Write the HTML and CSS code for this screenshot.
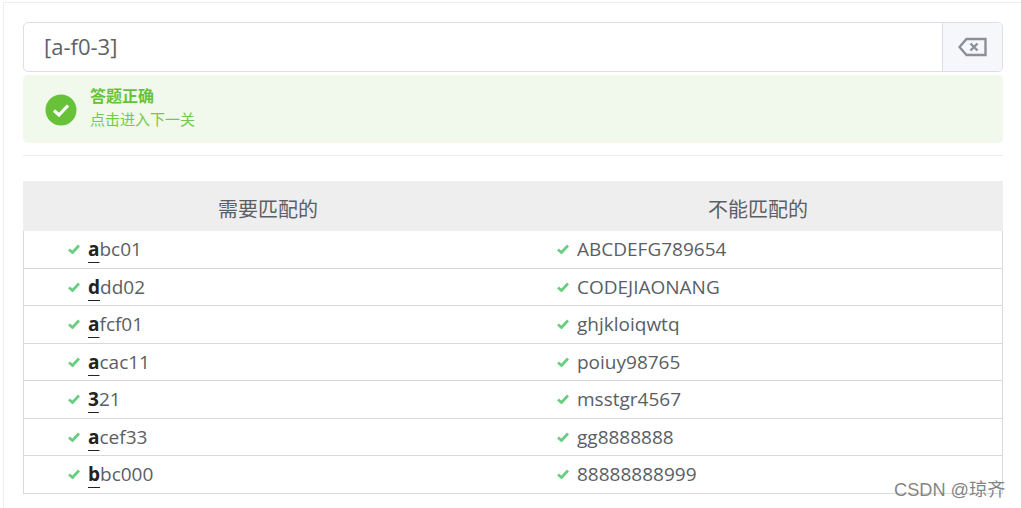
FILE: index.html
```html
<!DOCTYPE html>
<html lang="zh">
<head>
<meta charset="utf-8">
<title>正则练习</title>
<link rel="stylesheet" href="styles.css">
</head>
<body>
<main class="panel">
  <div class="input-group">
    <div class="input">[a-f0-3]</div>
    <div class="addon">
      <svg width="29" height="20" viewBox="0 0 29 20" fill="none" stroke="#8b8f99" stroke-width="2.4"><path d="M8.5 2H27.5V18H8.5L1.5 10Z"/><path d="M12.5 6.5L19.5 13.5M19.5 6.5L12.5 13.5" stroke-width="2.4"/></svg>
    </div>
  </div>
  <div class="alert">
    <svg class="alert-icon" width="32" height="32" viewBox="0 0 32 32"><circle cx="16" cy="16" r="15.5" fill="#67c23a"/><path d="M9 16.5L14 21L23 11.5" fill="none" stroke="#fff" stroke-width="3.2"/></svg>
    <div class="alert-body">
      <div class="alert-title">答题正确</div>
      <div class="alert-desc">点击进入下一关</div>
    </div>
  </div>
  <hr class="divider">
  <section class="table">
    <div class="thead">
      <div class="th">需要匹配的</div>
      <div class="th">不能匹配的</div>
    </div>
    <div class="row"><div class="cell"><svg class="check" viewBox="0 0 12 10"><path d="M1 5.5L4.5 8.5L11 1.5"/></svg><span><b>a</b>bc01</span></div><div class="cell"><svg class="check" viewBox="0 0 12 10"><path d="M1 5.5L4.5 8.5L11 1.5"/></svg><span>ABCDEFG789654</span></div></div>
    <div class="row"><div class="cell"><svg class="check" viewBox="0 0 12 10"><path d="M1 5.5L4.5 8.5L11 1.5"/></svg><span><b>d</b>dd02</span></div><div class="cell"><svg class="check" viewBox="0 0 12 10"><path d="M1 5.5L4.5 8.5L11 1.5"/></svg><span>CODEJIAONANG</span></div></div>
    <div class="row"><div class="cell"><svg class="check" viewBox="0 0 12 10"><path d="M1 5.5L4.5 8.5L11 1.5"/></svg><span><b>a</b>fcf01</span></div><div class="cell"><svg class="check" viewBox="0 0 12 10"><path d="M1 5.5L4.5 8.5L11 1.5"/></svg><span>ghjkloiqwtq</span></div></div>
    <div class="row"><div class="cell"><svg class="check" viewBox="0 0 12 10"><path d="M1 5.5L4.5 8.5L11 1.5"/></svg><span><b>a</b>cac11</span></div><div class="cell"><svg class="check" viewBox="0 0 12 10"><path d="M1 5.5L4.5 8.5L11 1.5"/></svg><span>poiuy98765</span></div></div>
    <div class="row"><div class="cell"><svg class="check" viewBox="0 0 12 10"><path d="M1 5.5L4.5 8.5L11 1.5"/></svg><span><b>3</b>21</span></div><div class="cell"><svg class="check" viewBox="0 0 12 10"><path d="M1 5.5L4.5 8.5L11 1.5"/></svg><span>msstgr4567</span></div></div>
    <div class="row"><div class="cell"><svg class="check" viewBox="0 0 12 10"><path d="M1 5.5L4.5 8.5L11 1.5"/></svg><span><b>a</b>cef33</span></div><div class="cell"><svg class="check" viewBox="0 0 12 10"><path d="M1 5.5L4.5 8.5L11 1.5"/></svg><span>gg8888888</span></div></div>
    <div class="row"><div class="cell"><svg class="check" viewBox="0 0 12 10"><path d="M1 5.5L4.5 8.5L11 1.5"/></svg><span><b>b</b>bc000</span></div><div class="cell"><svg class="check" viewBox="0 0 12 10"><path d="M1 5.5L4.5 8.5L11 1.5"/></svg><span>88888888999</span></div></div>
  </section>
</main>
<div class="watermark">CSDN @琼齐</div>
</body>
</html>
```
FILE: styles.css
```css
html, body { margin: 0; padding: 0; background: #fff; }
body {
  height: 508px;
  overflow: hidden;
  position: relative;
  font-family: "Open Sans", "Noto Sans", "Noto Sans CJK SC", sans-serif;
  color: #5a5e66;
}
.panel {
  margin: 2px 0 0 3px;
  padding: 19px 18px 0 19px;
  border-top: 1px solid #eeeeee;
  border-left: 1px solid #eeeeee;
  height: 506px;
  box-sizing: border-box;
}
.input-group {
  display: flex;
  height: 50px;
  box-sizing: border-box;
  border: 1px solid #dcdfe6;
  border-radius: 5px;
  overflow: hidden;
}
.input {
  flex: 1;
  padding-left: 20px;
  font-size: 22px;
  line-height: 47px;
  color: #606266;
}
.addon {
  width: 60px;
  box-sizing: border-box;
  background: #f5f7fa;
  border-left: 1px solid #dcdfe6;
  display: flex;
  align-items: center;
  justify-content: center;
}
.alert {
  margin-top: 3px;
  height: 68px;
  background: #f0f9eb;
  border-radius: 5px;
  display: flex;
  align-items: center;
  padding-left: 22px;
  gap: 13px;
}
.alert-icon { flex: none; margin-top: 1px; }
.alert-body { color: #67c23a; margin-top: -4px; }
.alert-title { font-size: 16px; font-weight: 700; line-height: 22px; }
.alert-desc { font-size: 15px; line-height: 20px; margin-top: 2px; color: #74c94a; }
.divider {
  margin: 12px 0 25px;
  border: 0;
  border-top: 1px solid #ebeef5;
  height: 0;
}
.table {
  border-right: 1px solid #d9d9d9;
  border-left: 1px solid #d9d9d9;
}
.thead {
  display: grid;
  grid-template-columns: 1fr 1fr;
  height: 50px;
  background: #eeeeee;
  margin: 0 -1px;
}
.th {
  text-align: center;
  font-size: 20px;
  line-height: 57px;
  color: #5a5e66;
}
.row {
  display: grid;
  grid-template-columns: 1fr 1fr;
  height: 37.5px;
  box-sizing: border-box;
  border-bottom: 1px solid #d9d9d9;
}
.cell {
  display: flex;
  align-items: center;
  padding-left: 44px;
  font-size: 19px;
  gap: 8px;
}
.cell b {
  color: #222;
  font-weight: 700;
  text-decoration: underline;
  text-decoration-thickness: 1px;
  text-underline-offset: 6px;
  text-decoration-skip-ink: none;
}
.check {
  width: 12px;
  height: 10px;
  flex: none;
  fill: none;
  stroke: #67cf7f;
  stroke-width: 2.8;
}
.watermark {
  position: absolute;
  left: 894px;
  top: 478px;
  font-family: "Liberation Sans", "Noto Sans CJK SC", sans-serif;
  font-size: 18.2px;
  line-height: 24px;
  color: rgba(110, 110, 110, 0.85);
  white-space: nowrap;
}
```
